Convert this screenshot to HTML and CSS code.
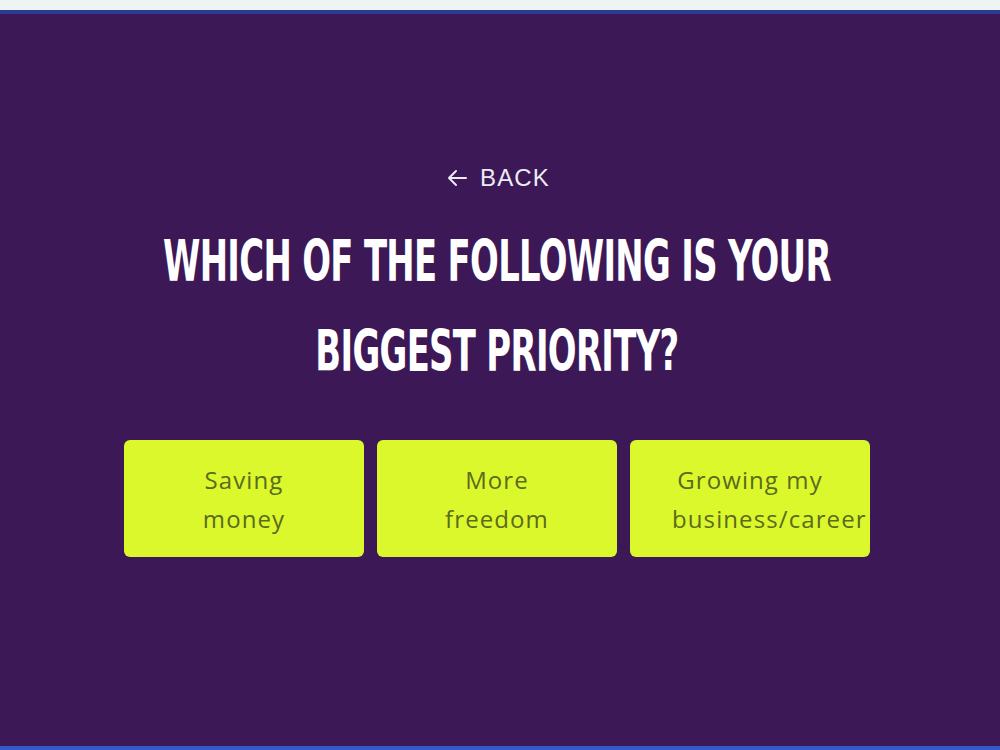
FILE: index.html
```html
<!DOCTYPE html>
<html lang="en">
<head>
  <meta charset="UTF-8">
  <title>Quiz - Priority</title>
  <link rel="stylesheet" href="styles.css">
</head>
<body>
  <div class="chrome"></div>

  <main class="stage">
    <a class="back" href="#">
      <svg width="22" height="18" viewBox="0 0 22 18" fill="none" stroke="currentColor" stroke-width="2" stroke-linecap="round" stroke-linejoin="round">
        <path d="M20 9H3M10 2L3 9l7 7"/>
      </svg>
      BACK
    </a>

    <h1 class="pregunta">Which of the following is your<br>biggest priority?</h1>

    <div class="opciones">
      <button class="opcion">Saving money</button>
      <button class="opcion">More freedom</button>
      <button class="opcion">Growing my business/career</button>
    </div>
  </main>
</body>
</html>
```

FILE: styles.css
```css
body {
  margin: 0;
  height: 750px;
  overflow: hidden;
  background: #3d1856;
  font-family: 'Open Sans', sans-serif;
}

.chrome {
  height: 10px;
  background: #eef3f3;
}

.stage {
  box-sizing: border-box;
  height: 740px;
  border-top: 4px solid #2c3b92;
  border-bottom: 4px solid #3658c6;
  background: #3d1856;
  padding: 149px 6px 0 0;
  display: flex;
  flex-direction: column;
  align-items: center;
  color: #fff;
}

.back {
  display: flex;
  align-items: center;
  gap: 12px;
  color: #ecebf3;
  text-decoration: none;
  font-family: 'Liberation Sans', sans-serif;
  font-size: 24px;
  line-height: 30px;
  letter-spacing: 1.2px;
  margin-left: 2px;
}

.pregunta {
  margin: 23px 0 0;
  font-family: 'DejaVu Sans Condensed', 'DejaVu Sans', sans-serif;
  font-weight: bold;
  font-size: 57px;
  line-height: 90px;
  text-transform: uppercase;
  text-align: center;
  letter-spacing: -1px;
  white-space: nowrap;
  transform: scaleX(0.66);
}

.opciones {
  display: flex;
  gap: 13px;
  margin-top: 44px;
}

.opcion {
  width: 240px;
  height: 117px;
  padding: 0 42px;
  border: none;
  border-radius: 6px;
  background: #dbf82c;
  color: #5b6a1c;
  font-family: 'Open Sans', sans-serif;
  font-size: 24px;
  line-height: 39px;
  letter-spacing: 1.1px;
  overflow: hidden;
  cursor: pointer;
}
```
